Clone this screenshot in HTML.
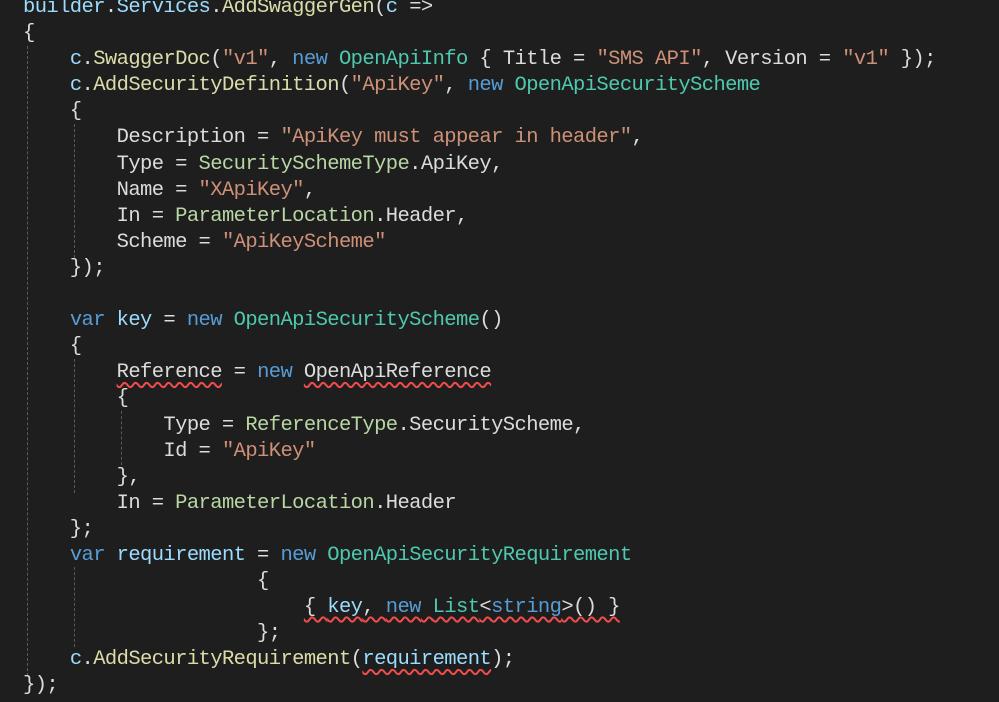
<!DOCTYPE html>
<html><head><meta charset="utf-8">
<style>
html,body{margin:0;padding:0;background:#1e1e1e;width:999px;height:702px;overflow:hidden}
pre{position:absolute;left:23px;top:-5px;margin:0;font-family:"Liberation Mono",monospace;font-size:20.5px;line-height:26.1px;color:#dcdcdc;letter-spacing:-0.6px}
.v{color:#9cdcfe}.k{color:#569cd6}.c{color:#4ec9b0}.m{color:#dcdcaa}.s{color:#ce9178}.e{color:#b8d7a3}
.w{text-decoration:underline wavy #f14c4c;text-decoration-thickness:1.5px;text-underline-offset:4px}
.g{position:absolute;width:0;border-left:1px dashed #5a5a5a}
</style></head><body>
<div class="g" style="left:27px;top:46px;height:630px"></div>
<div class="g" style="left:74px;top:124px;height:134px"></div>
<div class="g" style="left:74px;top:359px;height:134px"></div>
<div class="g" style="left:74px;top:567px;height:80px"></div>
<div class="g" style="left:121px;top:411px;height:54px"></div>
<pre><span class="v">builder</span>.<span class="v">Services</span>.<span class="m">AddSwaggerGen</span>(<span class="v">c</span> =&gt;
{
    <span class="v">c</span>.<span class="m">SwaggerDoc</span>(<span class="s">"v1"</span>, <span class="k">new</span> <span class="c">OpenApiInfo</span> { Title = <span class="s">"SMS API"</span>, Version = <span class="s">"v1"</span> });
    <span class="v">c</span>.<span class="m">AddSecurityDefinition</span>(<span class="s">"ApiKey"</span>, <span class="k">new</span> <span class="c">OpenApiSecurityScheme</span>
    {
        Description = <span class="s">"ApiKey must appear in header"</span>,
        Type = <span class="e">SecuritySchemeType</span>.ApiKey,
        Name = <span class="s">"XApiKey"</span>,
        In = <span class="e">ParameterLocation</span>.Header,
        Scheme = <span class="s">"ApiKeyScheme"</span>
    });

    <span class="k">var</span> <span class="v">key</span> = <span class="k">new</span> <span class="c">OpenApiSecurityScheme</span>()
    {
        <span class="w">Reference</span> = <span class="k">new</span> <span class="w">OpenApiReference</span>
        {
            Type = <span class="e">ReferenceType</span>.SecurityScheme,
            Id = <span class="s">"ApiKey"</span>
        },
        In = <span class="e">ParameterLocation</span>.Header
    };
    <span class="k">var</span> <span class="v">requirement</span> = <span class="k">new</span> <span class="c">OpenApiSecurityRequirement</span>
                    {
                        <span class="w">{ <span class="v">key</span>, <span class="k">new</span> <span class="c">List</span>&lt;<span class="k">string</span>&gt;() }</span>
                    };
    <span class="v">c</span>.<span class="m">AddSecurityRequirement</span>(<span class="v w">requirement</span>);
});</pre>
</body></html>
